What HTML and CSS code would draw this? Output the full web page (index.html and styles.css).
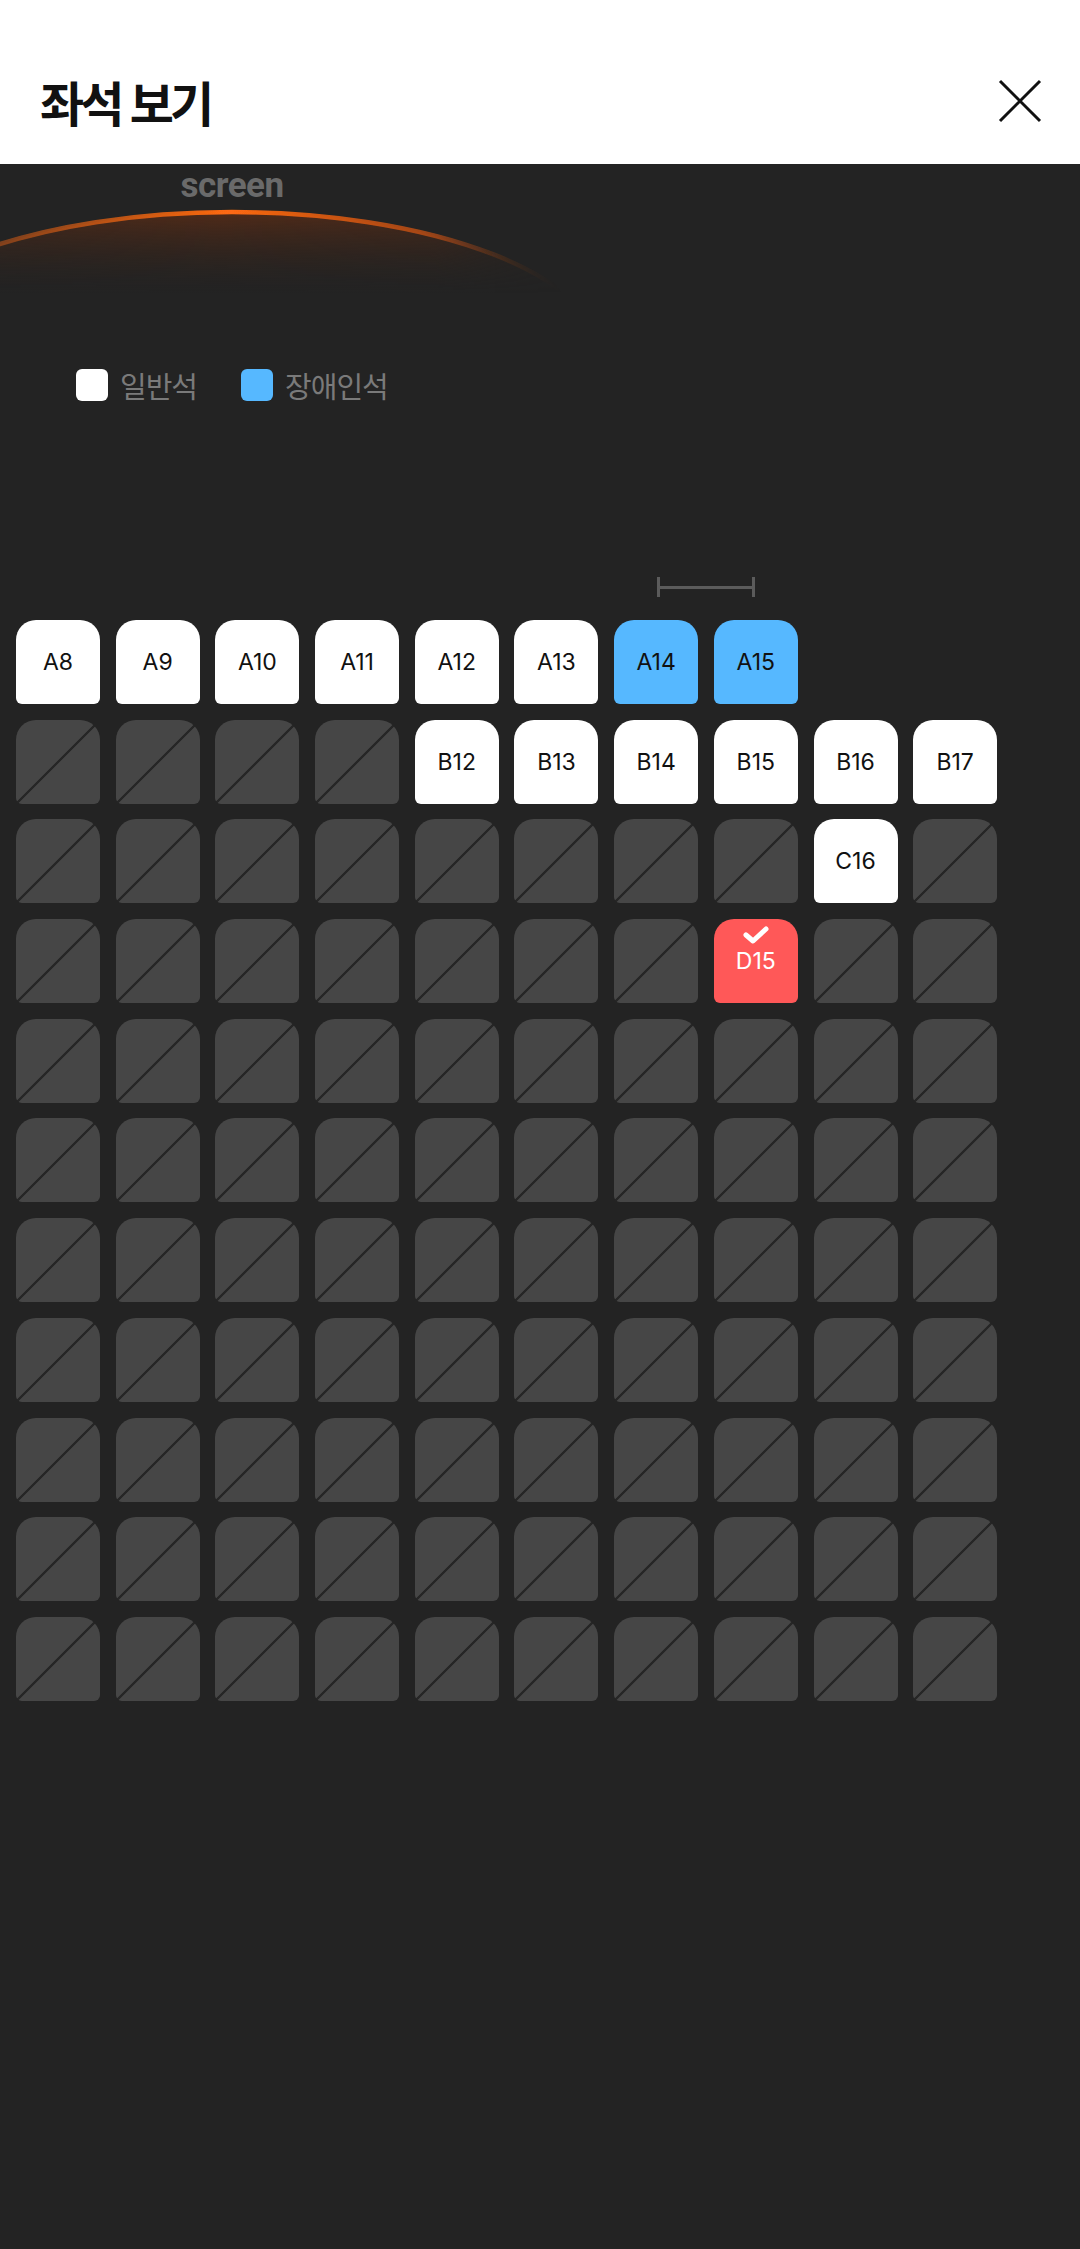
FILE: index.html
```html
<!doctype html>
<html lang="ko">
<head>
    <meta charset="utf-8">
    <title>좌석 보기</title>
    <link rel="stylesheet" href="styles.css">
</head>
<body>
    <!-- 상단 헤더 -->
    <div class="header">
        <h1 class="title">좌석 보기</h1>
        <div class="closeBtn">
            <svg width="44" height="44" viewBox="0 0 44 44">
                <path d="M2 2 L42 42 M42 2 L2 42" stroke="#111" stroke-width="3" fill="none"/>
            </svg>
        </div>
    </div>

    <div class="seatMap">
        <!-- 스크린 -->
        <div class="screenBox">
            <div class="screenLabel">screen</div>
            <svg class="screenArc" width="1080" height="100" viewBox="0 0 1080 100">
                <defs>
                    <linearGradient id="arcStroke" gradientUnits="userSpaceOnUse" x1="-140" y1="0" x2="560" y2="0">
                        <stop offset="0" stop-color="#ff6a12" stop-opacity="0.2"/>
                        <stop offset="0.53" stop-color="#ff6a12" stop-opacity="1"/>
                        <stop offset="0.8" stop-color="#e85a10" stop-opacity="0.75"/>
                        <stop offset="1" stop-color="#e85a10" stop-opacity="0"/>
                    </linearGradient>
                    <linearGradient id="arcGlow" x1="0" y1="0" x2="0" y2="100" gradientUnits="userSpaceOnUse">
                        <stop offset="0" stop-color="#5e2e16" stop-opacity="0.95"/>
                        <stop offset="0.5" stop-color="#3e261a" stop-opacity="0.5"/>
                        <stop offset="0.9" stop-color="#2a2320" stop-opacity="0"/>
                    </linearGradient>
                    <linearGradient id="fadeSide" gradientUnits="userSpaceOnUse" x1="-140" y1="0" x2="580" y2="0">
                        <stop offset="0" stop-color="#fff" stop-opacity="0.7"/>
                        <stop offset="0.5" stop-color="#fff" stop-opacity="1"/>
                        <stop offset="0.8" stop-color="#fff" stop-opacity="0.85"/>
                        <stop offset="1" stop-color="#fff" stop-opacity="0"/>
                    </linearGradient>
                    <mask id="sideMask">
                        <rect x="-200" y="0" width="1280" height="100" fill="url(#fadeSide)"/>
                    </mask>
                    <filter id="soft" x="-10%" y="-10%" width="120%" height="120%">
                        <feGaussianBlur stdDeviation="0.7"/>
                    </filter>
                </defs>
                <g mask="url(#sideMask)">
                    <ellipse cx="232" cy="154" rx="370" ry="145" fill="url(#arcGlow)"/>
                    <ellipse cx="232" cy="154" rx="370" ry="145" fill="none" stroke="url(#arcStroke)" stroke-width="4.5" filter="url(#soft)"/>
                </g>
            </svg>
        </div>

        <!-- 범례 -->
        <div class="legend">
            <div class="legendItem"><span class="legendBox"></span>일반석</div>
            <div class="legendItem"><span class="legendBox legendBlue"></span>장애인석</div>
        </div>

        <!-- 좌석 간격 표시 -->
        <div class="rulerRow">
            <div class="ruler"></div>
        </div>

        <!-- 좌석 배치 -->
        <div class="seatGrid">
            <div class="seat">A8</div>
            <div class="seat">A9</div>
            <div class="seat">A10</div>
            <div class="seat">A11</div>
            <div class="seat">A12</div>
            <div class="seat">A13</div>
            <div class="seat blue">A14</div>
            <div class="seat blue">A15</div>
            <div class="seatEmpty"></div>
            <div class="seatEmpty"></div>

            <div class="seat off"></div>
            <div class="seat off"></div>
            <div class="seat off"></div>
            <div class="seat off"></div>
            <div class="seat">B12</div>
            <div class="seat">B13</div>
            <div class="seat">B14</div>
            <div class="seat">B15</div>
            <div class="seat">B16</div>
            <div class="seat">B17</div>

            <div class="seat off"></div>
            <div class="seat off"></div>
            <div class="seat off"></div>
            <div class="seat off"></div>
            <div class="seat off"></div>
            <div class="seat off"></div>
            <div class="seat off"></div>
            <div class="seat off"></div>
            <div class="seat">C16</div>
            <div class="seat off"></div>

            <div class="seat off"></div>
            <div class="seat off"></div>
            <div class="seat off"></div>
            <div class="seat off"></div>
            <div class="seat off"></div>
            <div class="seat off"></div>
            <div class="seat off"></div>
            <div class="seat picked">
                <svg class="check" width="26" height="18" viewBox="0 0 26 18">
                    <path d="M3 9 L10 15 L23 3" stroke="#fff" stroke-width="5" fill="none" stroke-linecap="round" stroke-linejoin="round"/>
                </svg>
                D15
            </div>
            <div class="seat off"></div>
            <div class="seat off"></div>

            <div class="seat off"></div><div class="seat off"></div><div class="seat off"></div><div class="seat off"></div><div class="seat off"></div>
            <div class="seat off"></div><div class="seat off"></div><div class="seat off"></div><div class="seat off"></div><div class="seat off"></div>

            <div class="seat off"></div><div class="seat off"></div><div class="seat off"></div><div class="seat off"></div><div class="seat off"></div>
            <div class="seat off"></div><div class="seat off"></div><div class="seat off"></div><div class="seat off"></div><div class="seat off"></div>

            <div class="seat off"></div><div class="seat off"></div><div class="seat off"></div><div class="seat off"></div><div class="seat off"></div>
            <div class="seat off"></div><div class="seat off"></div><div class="seat off"></div><div class="seat off"></div><div class="seat off"></div>

            <div class="seat off"></div><div class="seat off"></div><div class="seat off"></div><div class="seat off"></div><div class="seat off"></div>
            <div class="seat off"></div><div class="seat off"></div><div class="seat off"></div><div class="seat off"></div><div class="seat off"></div>

            <div class="seat off"></div><div class="seat off"></div><div class="seat off"></div><div class="seat off"></div><div class="seat off"></div>
            <div class="seat off"></div><div class="seat off"></div><div class="seat off"></div><div class="seat off"></div><div class="seat off"></div>

            <div class="seat off"></div><div class="seat off"></div><div class="seat off"></div><div class="seat off"></div><div class="seat off"></div>
            <div class="seat off"></div><div class="seat off"></div><div class="seat off"></div><div class="seat off"></div><div class="seat off"></div>

            <div class="seat off"></div><div class="seat off"></div><div class="seat off"></div><div class="seat off"></div><div class="seat off"></div>
            <div class="seat off"></div><div class="seat off"></div><div class="seat off"></div><div class="seat off"></div><div class="seat off"></div>
        </div>
    </div>
</body>
</html>
```

FILE: styles.css
```css
*{margin: 0;padding: 0;box-sizing: border-box;}
html,body{background: #232323;}
body{font-family: "Noto Sans CJK KR", "Noto Sans", sans-serif;min-height: 2249px;display: flex;flex-direction: column;}

/* 헤더 */
.header{
    height: 164px;padding: 38px 38px 0 40px;background: #fff;
    display: flex;align-items: center;justify-content: space-between;
}
.header .title{font-size: 48px;font-weight: 700;color: #111;letter-spacing: -4px;line-height: 1;}
.header .closeBtn{width: 44px;height: 44px;}
.header .closeBtn svg{display: block;}

/* 좌석 영역 */
.seatMap{flex: 1;background: #232323;}

.screenBox{width: 464px;display: flex;flex-direction: column;align-items: center;}
.screenLabel{
    font-family: Roboto, "Liberation Sans", sans-serif;font-weight: 700;
    font-size: 35px;line-height: 35px;color: #6a6a6a;margin-top: 4px;letter-spacing: -0.5px;
}
.screenArc{display: block;align-self: flex-start;}

.legend{display: flex;gap: 44px;padding-left: 76px;margin-top: 66px;height: 32px;align-items: center;}
.legendItem{display: flex;align-items: center;gap: 12px;font-size: 29px;color: #7a7a7a;letter-spacing: -1px;line-height: 1;}
.legendBox{width: 32px;height: 32px;border-radius: 6px;background: #fff;}
.legendBox.legendBlue{background: #56b8ff;}

/* 좌석 그리드와 같은 칸을 쓰는 간격 표시줄 */
.rulerRow{
    display: grid;grid-template-columns: repeat(10, 84px);column-gap: 15.7px;
    padding-left: 16px;margin-top: 176px;
}
.rulerRow .ruler{
    grid-column: 7 / span 2;justify-self: center;
    width: 98px;height: 20px;
    border-left: 3px solid #5b5b5b;border-right: 3px solid #5b5b5b;
    background: linear-gradient(#5b5b5b, #5b5b5b) center / 100% 3px no-repeat;
}

.seatGrid{
    display: grid;grid-template-columns: repeat(10, 84px);grid-auto-rows: 84px;
    gap: 15.7px;padding-left: 16px;margin-top: 23px;
}

.seat{
    width: 84px;height: 84px;border-radius: 20px 20px 6px 6px;background: #fff;
    display: flex;align-items: center;justify-content: center;position: relative;
    font-family: Inter, Roboto, sans-serif;font-size: 23px;color: #111;
}
.seat.blue{background: #56b8ff;}
.seat.picked{background: #ff5858;color: #fff;}
.seat.picked .check{position: absolute;left: 29px;top: 7px;}
.seat.off{
    background: linear-gradient(to bottom right, #464646 calc(50% - 1.5px), #262626 calc(50% - 1px), #262626 calc(50% + 1px), #464646 calc(50% + 1.5px));
}
```
